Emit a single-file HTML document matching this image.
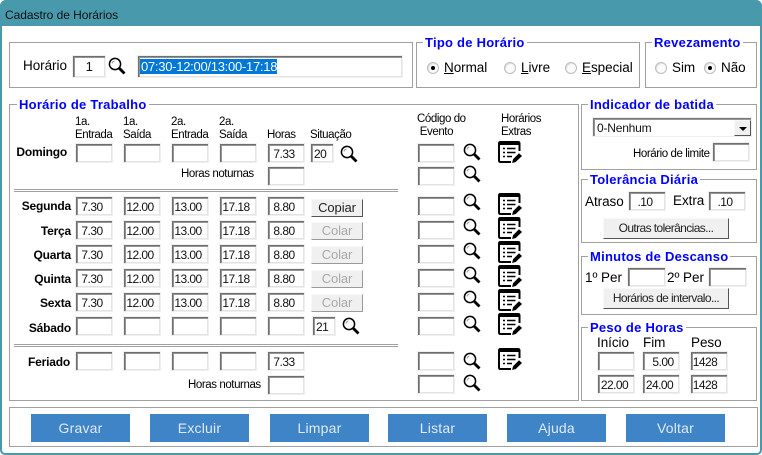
<!DOCTYPE html>
<html><head><meta charset="utf-8"><style>
html,body{margin:0;padding:0;background:#fff}
#w{position:relative;width:762px;height:455px;overflow:hidden;background:#fff;font:11.5px/14px "Liberation Sans",sans-serif;color:#000;letter-spacing:-.42px}
#w *{position:absolute;box-sizing:border-box;white-space:nowrap}
u{position:static!important}
.f{position:absolute;left:0;top:0;width:762px;height:455px;border:solid #4899ac;border-width:0 2px 2px 2px;border-radius:6px 6px 5px 5px}
.t{left:0;top:0;width:762px;height:26px;background:#4899ac;border-radius:6px 6px 0 0;padding:8px 0 0 5px;font-size:12px;letter-spacing:-.05px;color:#111}
.g{border:1px solid #a0a0a0}
.l{background:#fff;color:#0000ff;font-weight:bold;font-size:13px;line-height:15px;letter-spacing:.25px;padding:0 2px}
.i{width:38px;height:20px;border:1px solid #efefef;background:#fff;box-shadow:inset 1px 1px 0 #6f6f6f,inset 2px 2px 0 #959595,inset -1px -1px 0 #e4e4e4;text-align:center;padding:3px 4px 0 0;font-size:12px;line-height:14px;letter-spacing:-.55px;color:#111}
.s{width:24px;text-align:left;padding-left:3px}
.b{font-weight:bold;text-align:right;font-size:12px;letter-spacing:-.2px;width:68px;left:3px}
.c{background:#f0f0f0;border:1px solid;border-color:#f8f8f8 #555 #555 #f8f8f8;text-align:center;font-size:13px;line-height:15px;color:#222;letter-spacing:-.1px}
.d{color:#a8a8a8;border-color:#f8f8f8 #999 #999 #f8f8f8}
.o{font-size:12px;line-height:18px;letter-spacing:-.6px}
.a{width:99px;height:28px;background:#3f84c6;color:#dfeaf6;text-align:center;font-size:14px;line-height:28px;letter-spacing:.2px}
.m{width:18px;height:18px}
.x{width:26px;height:25px}
.r{width:12px;height:12px;border-radius:50%;background:#fafafa;border:1px solid #bdbdbd;box-shadow:inset 1px 1px 0 #e2e2e2}
.r b{left:3px;top:3px;width:4px;height:4px;border-radius:50%;background:#000}
.n{font-size:13.5px;letter-spacing:-.05px}
.h{height:3px;border-top:1px solid #a0a0a0;border-bottom:1px solid #a0a0a0}
</style></head><body><div id="w">
<svg width="0" height="0" style="left:0;top:0"><defs>
<symbol id="mg" viewBox="0 0 18 18"><circle cx="7" cy="7" r="5.600" fill="#fff" stroke="#000" stroke-width="1.500"/><path d="M4 6.500A3.200 3.200 0 0 1 6.500 4" fill="none" stroke="#999" stroke-width="1"/><path d="M11 11L16.500 16.500" stroke="#000" stroke-width="2.800"/></symbol>
<symbol id="ex" viewBox="0 0 26 25"><path d="M22.500 11V3.500Q22.500 2 21 2H3.500Q2 2 2 3.500V20.500Q2 22 3.500 22H14" fill="none" stroke="#000" stroke-width="2"/><path d="M2 2H22.500V5H2Z" fill="#000"/><path d="M6 8.500h2M10 8.500h8.500M6 12.500h2M10 12.500h8.500M6 16.500h2M10 16.500h5" stroke="#000" stroke-width="1.600"/><path d="M14.500 23.500L15.800 19 22 12.800 25.500 16 19 22.300Z" fill="#000" stroke="#fff" stroke-width=".7"/></symbol>
</defs></svg>
<div class="f"></div>
<div class="t">Cadastro de Horários</div>

<div class="g" style="left:9px;top:42px;width:404px;height:46px"></div>
<div class="n" style="left:23px;top:59px">Horário</div>
<div class="i" style="left:72px;top:55px;width:34px;height:23px;padding:4px 0 0 0;font-size:13px">1</div>
<svg class="m" style="left:108px;top:57px"><use href="#mg"/></svg>
<div class="i" style="left:137px;top:55px;width:266px;height:23px"></div>
<div style="left:140px;top:59px;width:137px;height:15px;background:#0078d7;color:#fff;font-size:13px;line-height:15px;letter-spacing:-.27px;padding-left:1px">07:30-12:00/13:00-17:18</div>

<div class="g" style="left:416px;top:42px;width:224px;height:46px"></div>
<div class="l" style="left:423px;top:35px">Tipo de Horário</div>
<div class="r" style="left:427px;top:62px"><b></b></div><div class="n" style="left:444px;top:61px"><u>N</u>ormal</div>
<div class="r" style="left:504px;top:62px"></div><div class="n" style="left:521px;top:61px"><u>L</u>ivre</div>
<div class="r" style="left:565px;top:62px"></div><div class="n" style="left:582px;top:61px"><u>E</u>special</div>

<div class="g" style="left:645px;top:42px;width:112px;height:46px"></div>
<div class="l" style="left:652px;top:35px">Revezamento</div>
<div class="r" style="left:655px;top:62px"></div><div class="n" style="left:672px;top:61px">Sim</div>
<div class="r" style="left:704px;top:62px"><b></b></div><div class="n" style="left:721px;top:61px">Não</div>

<div class="g" style="left:9px;top:104px;width:570px;height:297px"></div>
<div class="l" style="left:17px;top:97px">Horário de Trabalho</div>
<div style="left:75px;top:116px;line-height:13px">1a.<br>Entrada</div>
<div style="left:123px;top:116px;line-height:13px">1a.<br>Saída</div>
<div style="left:171px;top:116px;line-height:13px">2a.<br>Entrada</div>
<div style="left:219px;top:116px;line-height:13px">2a.<br>Saída</div>
<div style="left:267px;top:129px;line-height:13px">Horas</div>
<div style="left:310px;top:129px;line-height:13px">Situação</div>
<div style="left:417px;top:113px;line-height:13px">Código do<br>&nbsp;Evento</div>
<div style="left:501px;top:113px;line-height:13px">Horários<br>Extras</div>

<div class="b" style="top:145px;width:64px">Domingo</div>
<div class="i" style="left:75px;top:143px"></div><div class="i" style="left:123px;top:143px"></div><div class="i" style="left:171px;top:143px"></div><div class="i" style="left:219px;top:143px"></div>
<div class="i" style="left:267px;top:143px">7.33</div>
<div class="i s" style="left:310px;top:143px">20</div>
<svg class="m" style="left:340px;top:145px"><use href="#mg"/></svg>
<div class="i" style="left:417px;top:143px"></div><svg class="m" style="left:463px;top:143px"><use href="#mg"/></svg>
<svg class="x" style="left:497px;top:140px"><use href="#ex"/></svg>
<div style="left:181px;top:167px">Horas noturnas</div>
<div class="i" style="left:267px;top:166px"></div>
<div class="i" style="left:417px;top:166px"></div><svg class="m" style="left:463px;top:165px"><use href="#mg"/></svg>

<div class="h" style="left:14px;top:189px;width:384px"></div>

<div class="b" style="top:199px">Segunda</div>
<div class="i" style="left:75px;top:196px">7.30</div><div class="i" style="left:123px;top:196px">12.00</div><div class="i" style="left:171px;top:196px">13.00</div><div class="i" style="left:219px;top:196px">17.18</div><div class="i" style="left:267px;top:196px">8.80</div>
<div class="c" style="left:311px;top:199px;width:52px;height:18px">Copiar</div>
<div class="i" style="left:417px;top:196px"></div><svg class="m" style="left:463px;top:193px"><use href="#mg"/></svg>
<svg class="x" style="left:497px;top:192px"><use href="#ex"/></svg>

<div class="b" style="top:224px">Terça</div>
<div class="i" style="left:75px;top:220px">7.30</div><div class="i" style="left:123px;top:220px">12.00</div><div class="i" style="left:171px;top:220px">13.00</div><div class="i" style="left:219px;top:220px">17.18</div><div class="i" style="left:267px;top:220px">8.80</div>
<div class="c d" style="left:311px;top:222px;width:52px;height:18px">Colar</div>
<div class="i" style="left:417px;top:220px"></div><svg class="m" style="left:463px;top:218px"><use href="#mg"/></svg>
<svg class="x" style="left:497px;top:216px"><use href="#ex"/></svg>

<div class="b" style="top:248px">Quarta</div>
<div class="i" style="left:75px;top:244px">7.30</div><div class="i" style="left:123px;top:244px">12.00</div><div class="i" style="left:171px;top:244px">13.00</div><div class="i" style="left:219px;top:244px">17.18</div><div class="i" style="left:267px;top:244px">8.80</div>
<div class="c d" style="left:311px;top:246px;width:52px;height:18px">Colar</div>
<div class="i" style="left:417px;top:244px"></div><svg class="m" style="left:463px;top:242px"><use href="#mg"/></svg>
<svg class="x" style="left:497px;top:240px"><use href="#ex"/></svg>

<div class="b" style="top:272px">Quinta</div>
<div class="i" style="left:75px;top:268px">7.30</div><div class="i" style="left:123px;top:268px">12.00</div><div class="i" style="left:171px;top:268px">13.00</div><div class="i" style="left:219px;top:268px">17.18</div><div class="i" style="left:267px;top:268px">8.80</div>
<div class="c d" style="left:311px;top:270px;width:52px;height:18px">Colar</div>
<div class="i" style="left:417px;top:268px"></div><svg class="m" style="left:463px;top:266px"><use href="#mg"/></svg>
<svg class="x" style="left:497px;top:264px"><use href="#ex"/></svg>

<div class="b" style="top:296px">Sexta</div>
<div class="i" style="left:75px;top:292px">7.30</div><div class="i" style="left:123px;top:292px">12.00</div><div class="i" style="left:171px;top:292px">13.00</div><div class="i" style="left:219px;top:292px">17.18</div><div class="i" style="left:267px;top:292px">8.80</div>
<div class="c d" style="left:311px;top:294px;width:52px;height:18px">Colar</div>
<div class="i" style="left:417px;top:292px"></div><svg class="m" style="left:463px;top:290px"><use href="#mg"/></svg>
<svg class="x" style="left:497px;top:288px"><use href="#ex"/></svg>

<div class="b" style="top:321px">Sábado</div>
<div class="i" style="left:75px;top:316px"></div><div class="i" style="left:123px;top:316px"></div><div class="i" style="left:171px;top:316px"></div><div class="i" style="left:219px;top:316px"></div><div class="i" style="left:267px;top:316px"></div>
<div class="i s" style="left:312px;top:316px">21</div>
<svg class="m" style="left:342px;top:317px"><use href="#mg"/></svg>
<div class="i" style="left:417px;top:316px"></div><svg class="m" style="left:463px;top:315px"><use href="#mg"/></svg>
<svg class="x" style="left:497px;top:312px"><use href="#ex"/></svg>

<div class="h" style="left:14px;top:344px;width:384px"></div>

<div class="b" style="top:355px;width:67px">Feriado</div>
<div class="i" style="left:75px;top:351px"></div><div class="i" style="left:123px;top:351px"></div><div class="i" style="left:171px;top:351px"></div><div class="i" style="left:219px;top:351px"></div><div class="i" style="left:267px;top:351px">7.33</div>
<div class="i" style="left:417px;top:351px"></div><svg class="m" style="left:463px;top:352px"><use href="#mg"/></svg>
<svg class="x" style="left:497px;top:347px"><use href="#ex"/></svg>
<div style="left:188px;top:378px">Horas noturnas</div>
<div class="i" style="left:267px;top:375px"></div>
<div class="i" style="left:417px;top:374px"></div><svg class="m" style="left:463px;top:374px"><use href="#mg"/></svg>

<div class="g" style="left:581px;top:104px;width:176px;height:66px"></div>
<div class="l" style="left:588px;top:97px">Indicador de batida</div>
<div class="i" style="left:592px;top:117px;width:160px;height:20px;text-align:left;padding:3px 0 0 4px;box-shadow:inset 1px 1px 0 #777,inset 2px 2px 0 #999;letter-spacing:-.2px">0-Nenhum</div>
<div class="c" style="left:734px;top:120px;width:17px;height:16px;background:#f0f0f0"></div>
<div style="left:739px;top:127px;width:0;height:0;border:4px solid transparent;border-top:4px solid #000;border-bottom:0"></div>
<div style="left:633px;top:147px">Horário de limite</div>
<div class="i" style="left:712px;top:142px"></div>

<div class="g" style="left:581px;top:179px;width:176px;height:64px"></div>
<div class="l" style="left:588px;top:172px">Tolerância Diária</div>
<div class="n" style="left:585px;top:195px">Atraso</div>
<div class="i" style="left:628px;top:191px;width:38px;height:20px">.10</div>
<div class="n" style="left:673px;top:194px">Extra</div>
<div class="i" style="left:708px;top:191px;width:38px;height:20px">.10</div>
<div class="c o" style="left:603px;top:218px;width:126px;height:21px">Outras tolerâncias...</div>

<div class="g" style="left:581px;top:256px;width:176px;height:59px"></div>
<div class="l" style="left:588px;top:249px">Minutos de Descanso</div>
<div class="n" style="left:585px;top:271px">1º Per</div>
<div class="i" style="left:627px;top:267px;width:39px"></div>
<div class="n" style="left:667px;top:271px">2º Per</div>
<div class="i" style="left:708px;top:267px;width:39px"></div>
<div class="c o" style="left:603px;top:288px;width:126px;height:21px">Horários de intervalo...</div>

<div class="g" style="left:581px;top:327px;width:176px;height:74px"></div>
<div class="l" style="left:588px;top:320px">Peso de Horas</div>
<div class="n" style="left:597px;top:336px">Início</div>
<div class="n" style="left:643px;top:336px">Fim</div>
<div class="n" style="left:691px;top:336px">Peso</div>
<div class="i" style="left:597px;top:351px"></div>
<div class="i" style="left:642px;top:351px;padding:3px 0 0 4px">5.00</div>
<div class="i" style="left:690px;top:351px;padding:3px 8px 0 0">1428</div>
<div class="i" style="left:597px;top:374px;padding:3px 3px 0 0">22.00</div>
<div class="i" style="left:642px;top:374px;padding:3px 3px 0 0">24.00</div>
<div class="i" style="left:690px;top:374px;padding:3px 8px 0 0">1428</div>

<div class="g" style="left:9px;top:407px;width:749px;height:40px"></div>
<div class="a" style="left:31px;top:414px">Gravar</div>
<div class="a" style="left:150px;top:414px">Excluir</div>
<div class="a" style="left:270px;top:414px">Limpar</div>
<div class="a" style="left:388px;top:414px">Listar</div>
<div class="a" style="left:507px;top:414px">Ajuda</div>
<div class="a" style="left:626px;top:414px">Voltar</div>
</div></body></html>
